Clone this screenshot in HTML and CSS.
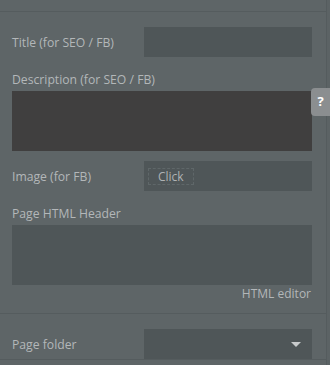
FILE: index.html
```html
<!DOCTYPE html>
<html lang="en">
<head>
    <meta charset="UTF-8">
    <title>Page settings</title>
    <link rel="stylesheet" href="styles.css">
</head>
<body>
    <div class="panel">
        <div class="section section-top"></div>
        <div class="section">
            <div class="row first">
                <label class="label">Title (for SEO / FB)</label>
                <div class="input"></div>
            </div>
            <div class="block">
                <label class="label">Description (for SEO / FB)</label>
                <div class="textarea dark"></div>
            </div>
            <div class="row">
                <label class="label">Image (for FB)</label>
                <div class="input">
                    <span class="click-btn">Click</span>
                </div>
            </div>
            <div class="block">
                <label class="label">Page HTML Header</label>
                <div class="textarea"></div>
                <div class="editor-link">HTML editor</div>
            </div>
        </div>
        <div class="section">
            <div class="row first">
                <label class="label">Page folder</label>
                <div class="input select"><span class="caret"></span></div>
            </div>
        </div>
    </div>
    <div class="help-tab">?</div>
</body>
</html>
```

FILE: styles.css
```css
body {
    margin: 0;
    background-color: #5c6365;
    font-family: 'Open Sans', sans-serif;
    font-size: 12px;
    color: #b3b7b9;
    width: 330px;
    height: 365px;
    overflow: hidden;
}
.panel {
    width: 326px;
    height: 365px;
    background-color: #5e6567;
    border-right: 1px solid #555c5e;
}
.section {
    border-bottom: 1px solid #555c5e;
    padding: 0 14px 0 12px;
}
.section-top {
    height: 11px;
    padding: 0;
}
.row {
    display: flex;
    align-items: center;
    justify-content: space-between;
    margin-top: 10px;
    height: 30px;
}
.row.first {
    margin-top: 15px;
}
.block {
    margin-top: 15px;
}
.block .label {
    display: block;
    line-height: 16px;
    margin-bottom: 3px;
}
.label {
    font-size: 12.2px;
}
.input {
    width: 168px;
    height: 30px;
    background-color: #4f5658;
    box-sizing: border-box;
    display: flex;
    align-items: center;
    padding-left: 4px;
}
.textarea {
    height: 60px;
    background-color: #4f5658;
}
.textarea.dark {
    background-color: #403f3f;
}
.click-btn {
    border: 1px dashed #5f6769;
    padding: 0 9px;
    height: 17px;
    line-height: 16px;
    box-sizing: border-box;
    font-size: 12px;
    color: #aeb2b4;
}
.editor-link {
    text-align: right;
    line-height: 18px;
    margin: 0 1px 10px 0;
}
.select {
    justify-content: flex-end;
    padding-right: 11px;
}
.caret {
    width: 0;
    height: 0;
    border-left: 5px solid transparent;
    border-right: 5px solid transparent;
    border-top: 5px solid #c8cbcc;
}
.help-tab {
    position: absolute;
    top: 88px;
    left: 311px;
    width: 19px;
    height: 28px;
    background-color: #8b8e90;
    border-radius: 4px 0 0 4px;
    color: #ffffff;
    font-weight: bold;
    font-size: 13px;
    line-height: 26px;
    text-align: center;
}
```
